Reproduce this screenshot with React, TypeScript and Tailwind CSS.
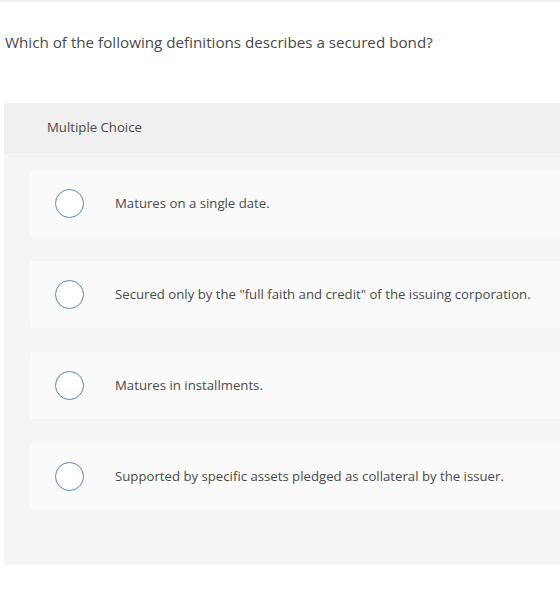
import React from "react";

const options = [
  "Matures on a single date.",
  'Secured only by the "full faith and credit" of the issuing corporation.',
  "Matures in installments.",
  "Supported by specific assets pledged as collateral by the issuer.",
];

const App: React.FC = () => {
  return (
    <div className="w-[560px] h-[611px] bg-white font-['Open_Sans',sans-serif] text-[#4a4a4a] border-t-2 border-[#f2f2f2]">
      <p className="pl-[5px] pt-[30px] text-[15.2px] leading-[20px]">
        Which of the following definitions describes a secured bond?
      </p>

      <div className="ml-[4px] mt-[51px] bg-[#f5f5f5] rounded-l-[3px] pb-[55px]">
        <div className="h-[50px] bg-[#f0f0f0] rounded-tl-[3px] flex items-center pl-[43px] text-[13.2px]">
          Multiple Choice
        </div>
        <div className="pt-[17px] pl-[26px] flex flex-col gap-[24px]">
          {options.map((text) => (
            <div
              key={text}
              className="h-[67px] bg-[#fafafa] rounded-l-[3px] flex items-center"
            >
              <span className="ml-[25px] w-[29px] h-[29px] rounded-full border-[1.5px] border-[#5a86b6] bg-white shrink-0" />
              <span className="ml-[31px] text-[13.2px]">{text}</span>
            </div>
          ))}
        </div>
      </div>
    </div>
  );
};

export default App;
